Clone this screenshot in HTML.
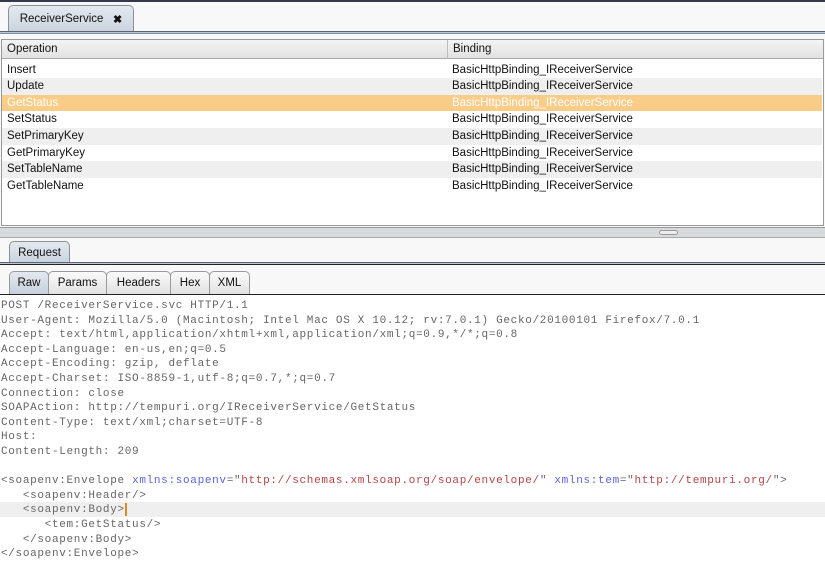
<!DOCTYPE html>
<html><head><meta charset="utf-8"><style>
*{margin:0;padding:0;box-sizing:border-box}
body{width:825px;height:572px;overflow:hidden;background:#f8f8f8;font-family:"Liberation Sans",sans-serif;font-size:11px;color:#111;position:relative}
.abs{position:absolute}
.tab{position:absolute;border:1px solid #8a8f99;border-bottom:none;border-radius:5px 5px 0 0;background:linear-gradient(#e4e9ef,#c9d3de);font-size:11.5px;display:flex;align-items:center;justify-content:center}
.row{position:absolute;left:2px;width:820px;height:17px;line-height:17px;font-size:11.5px}
.row span{position:absolute;top:0}
.sub{position:absolute;top:271px;height:23px;border:1px solid #999;border-bottom:none;border-radius:5px 5px 0 0;background:linear-gradient(#fafafa,#e2e2e2);font-size:11.5px;display:flex;align-items:center;justify-content:center}
pre{position:absolute;left:1px;top:299px;font-family:"Liberation Mono",monospace;font-size:11px;line-height:14.6px;color:#666;letter-spacing:0.68px}
.a{color:#5a64d8}.v{color:#b44444}
</style></head><body>
<div class="abs" style="left:0;top:0;width:825px;height:2px;background:#33384a"></div>
<div class="tab" style="left:8px;top:5px;width:126px;height:27px">ReceiverService&nbsp;&nbsp;&nbsp;<b style="font-size:11px">✖</b></div>
<div class="abs" style="left:0;top:31px;width:825px;height:3px;background:#b9c6d6;border-top:1px solid #5c6472;border-bottom:1px solid #8090a4"></div>
<div class="abs" style="left:1px;top:39px;width:823px;height:187px;border:1px solid #999;background:#fff"></div>
<div class="abs" style="left:2px;top:40px;width:821px;height:19px;background:linear-gradient(#f4f4f4,#e2e2e2);border-bottom:1px solid #aaa;font-size:11.5px;line-height:18px"><span style="position:absolute;left:5px">Operation</span><span style="position:absolute;left:445px;top:0;height:18px;border-left:1px solid #bbb"></span><span style="position:absolute;left:451px">Binding</span></div>
<div class="row" style="top:62px;background:#fff"><span style="left:5px">Insert</span><span style="left:450px">BasicHttpBinding_IReceiverService</span></div>
<div class="row" style="top:78px;background:#efefef"><span style="left:5px">Update</span><span style="left:450px">BasicHttpBinding_IReceiverService</span></div>
<div class="row" style="top:95px;background:#f9cc88;color:#fff"><span style="left:5px">GetStatus</span><span style="left:450px">BasicHttpBinding_IReceiverService</span></div>
<div class="row" style="top:111px;background:#fff"><span style="left:5px">SetStatus</span><span style="left:450px">BasicHttpBinding_IReceiverService</span></div>
<div class="row" style="top:128px;background:#efefef"><span style="left:5px">SetPrimaryKey</span><span style="left:450px">BasicHttpBinding_IReceiverService</span></div>
<div class="row" style="top:145px;background:#fff"><span style="left:5px">GetPrimaryKey</span><span style="left:450px">BasicHttpBinding_IReceiverService</span></div>
<div class="row" style="top:161px;background:#efefef"><span style="left:5px">SetTableName</span><span style="left:450px">BasicHttpBinding_IReceiverService</span></div>
<div class="row" style="top:178px;background:#fff"><span style="left:5px">GetTableName</span><span style="left:450px">BasicHttpBinding_IReceiverService</span></div>
<div class="abs" style="left:0;top:227px;width:825px;height:11px;background:#d8dadd;border-top:1px solid #999;border-bottom:1px solid #aaa"></div>
<div class="abs" style="left:659px;top:230px;width:19px;height:5px;border:1px solid #999;border-radius:3px;background:#eee"></div>
<div class="tab" style="left:9px;top:241px;width:61px;height:22px">Request</div>
<div class="abs" style="left:0;top:262px;width:825px;height:3px;background:#b9c6d6;border-top:1px solid #5c6472;border-bottom:1px solid #222"></div>
<div class="sub" style="left:9px;width:40px;background:linear-gradient(#e4e9ef,#c6d0dc)">Raw</div>
<div class="sub" style="left:48px;width:59px">Params</div>
<div class="sub" style="left:106px;width:65px">Headers</div>
<div class="sub" style="left:170px;width:40px">Hex</div>
<div class="sub" style="left:209px;width:41px">XML</div>
<div class="abs" style="left:0;top:294px;width:825px;height:278px;background:#fff;border-top:1px solid #222"></div>
<div class="abs" style="left:0;top:502px;width:825px;height:15px;background:#efefef"></div>
<div class="abs" style="left:125px;top:503px;width:2px;height:13px;background:#e08a1e"></div>
<pre>POST /ReceiverService.svc HTTP/1.1
User-Agent: Mozilla/5.0 (Macintosh; Intel Mac OS X 10.12; rv:7.0.1) Gecko/20100101 Firefox/7.0.1
Accept: text/html,application/xhtml+xml,application/xml;q=0.9,*/*;q=0.8
Accept-Language: en-us,en;q=0.5
Accept-Encoding: gzip, deflate
Accept-Charset: ISO-8859-1,utf-8;q=0.7,*;q=0.7
Connection: close
SOAPAction: http://tempuri.org/IReceiverService/GetStatus
Content-Type: text/xml;charset=UTF-8
Host: 
Content-Length: 209

&lt;soapenv:Envelope <span class="a">xmlns:soapenv</span>="<span class="v">http://schemas.xmlsoap.org/soap/envelope/</span>" <span class="a">xmlns:tem</span>="<span class="v">http://tempuri.org/</span>"&gt;
   &lt;soapenv:Header/&gt;
   &lt;soapenv:Body&gt;
      &lt;tem:GetStatus/&gt;
   &lt;/soapenv:Body&gt;
&lt;/soapenv:Envelope&gt;</pre>
</body></html>
